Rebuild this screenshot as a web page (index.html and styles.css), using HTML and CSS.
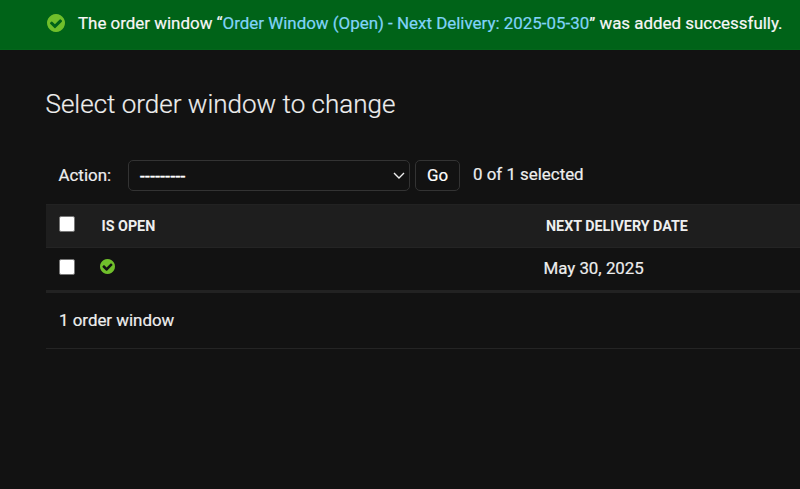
FILE: index.html
```html
<!DOCTYPE html>
<html lang="en">
<head>
<meta charset="utf-8">
<title>Select order window to change</title>
<link rel="stylesheet" href="styles.css">
</head>
<body>
<svg class="defs" width="0" height="0" aria-hidden="true">
  <symbol id="yes" viewBox="128 128 1536 1536"><path d="M1412 734q0-28-18-46l-91-90q-19-19-45-19t-45 19l-408 407-226-226q-19-19-45-19t-45 19l-91 90q-18 18-18 46 0 27 18 45l362 362q19 19 45 19 27 0 46-19l543-543q18-18 18-45zm252 162q0 209-103 385.5t-279.5 279.5-385.5 103-385.5-103-279.5-279.5-103-385.5 103-385.5 279.5-279.5 385.5-103 385.5 103 279.5 279.5 103 385.5z"/></symbol>
</svg>
<div class="message">
  <svg class="message-icon"><use href="#yes"/></svg>
  <span class="message-text">The order window “<a href="#">Order Window (Open) - Next Delivery: 2025-05-30</a>” was added successfully.</span>
</div>
<main class="content">
  <h1>Select order window to change</h1>
  <div class="actions">
    <span class="label">Action:</span>
    <div class="select"><span class="dashes">---------</span>
      <svg class="chevron" viewBox="0 0 12 8"><path d="M1 1l5 5 5-5"/></svg>
    </div>
    <button class="go" type="button">Go</button>
    <span class="counter">0 of 1 selected</span>
  </div>
  <div class="row head">
    <input type="checkbox" class="check" aria-label="Select all">
    <span class="open">IS OPEN</span>
    <span class="date">NEXT DELIVERY DATE</span>
  </div>
  <div class="row item">
    <input type="checkbox" class="check" aria-label="Select row">
    <span class="open"><svg class="row-icon"><use href="#yes"/></svg></span>
    <span class="date">May 30, 2025</span>
  </div>
  <div class="paginator">1 order window</div>
</main>
</body>
</html>
```
FILE: styles.css
```css
* { box-sizing: border-box; }
html, body { height: 100%; }
body {
  margin: 0;
  overflow: hidden;
  background: #121212;
  color: #eee;
  font: 16.9px/20px Roboto, sans-serif;
  -webkit-text-stroke: .2px currentColor;
}
.defs { display: none; }
.message {
  display: flex;
  align-items: center;
  height: 50px;
  padding: 0 0 3px 47px;
  border-bottom: 1px solid #04661b;
  background: #006318;
  color: #f7f7f7;
  font-size: 16.93px;
  white-space: nowrap;
}
.message-icon { width: 18px; height: 18px; margin-right: 13px; fill: #70bf2b; }
.message a { color: #81d4fa; text-decoration: none; }
.content { padding-left: 45.5px; }
h1 {
  margin: 39px 0 40px;
  font-size: 26px;
  line-height: 31px;
  font-weight: 300;
}
.actions { display: flex; align-items: center; height: 31px; padding-left: 13px; }
.label { width: 69.5px; padding-bottom: 2px; }
.select {
  display: flex;
  align-items: center;
  justify-content: space-between;
  width: 282px;
  height: 31px;
  padding: 0 4px 0 11px;
  border: 1px solid #333;
  border-radius: 5px;
}
.dashes { color: #fff; letter-spacing: .4px; -webkit-text-stroke: .4px #fff; }
.chevron { width: 12px; height: 8px; fill: none; stroke: #eee; stroke-width: 1.4; }
.go {
  width: 45px;
  height: 31px;
  margin: 0 13px 0 5px;
  padding: 0 0 2px;
  border: 1px solid #333;
  border-radius: 5px;
  background: #121212;
  color: #fff;
  font: inherit;
}
.counter { padding-bottom: 4px; }
.row { display: flex; align-items: center; padding-left: 13.5px; }
.head {
  height: 44px;
  margin-top: 13px;
  background: #1e1e1e;
  border-top: 1px solid #222;
  border-bottom: 1px solid #242424;
  font-size: 14.3px;
  font-weight: 700;
  -webkit-text-stroke: 0;
}
.item { height: 45px; border-bottom: 3px solid #222; }
.check {
  appearance: none;
  width: 16px;
  height: 16px;
  margin: 0 26.5px 5px 0;
  border: 1px solid #777;
  border-radius: 2px;
  background: #fff;
}
.open { width: 444.5px; }
.item .open { width: 443.4px; padding-bottom: 6px; line-height: 0; }
.item .date { padding-bottom: 3px; }
.item .check { margin-right: 25px; }
.row-icon { width: 15px; height: 15px; fill: #70bf2b; }
.paginator {
  height: 56px;
  padding: 17px 13.5px 0;
  border-bottom: 1px solid #242424;
}
```
